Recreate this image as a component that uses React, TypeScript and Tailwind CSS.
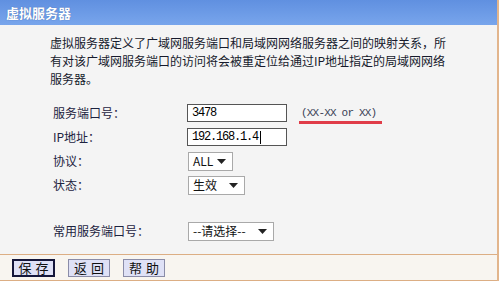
import { ReactNode } from "react";

function Caret() {
  return (
    <svg width="9" height="5" viewBox="0 0 9 5" className="shrink-0">
      <path d="M0 0 H9 L4.5 5 Z" fill="#222" />
    </svg>
  );
}

function Row({ label, children }: { label: string; children: ReactNode }) {
  return (
    <div className="flex items-center h-[24px]">
      <div className="w-[187px] shrink-0 pl-[53px] whitespace-nowrap text-[12px] text-[#1c2340]">{label}</div>
      <div className="flex items-center">{children}</div>
    </div>
  );
}

function Select({ value, width }: { value: string; width: string }) {
  return (
    <div
      className={`${width} h-[19px] ml-[1px] flex items-center justify-between pl-[4px] pr-[6px] bg-white border border-[#a9a9a9] text-[12px] text-[#111]`}
    >
      <span>{value}</span>
      <Caret />
    </div>
  );
}

export default function App() {
  return (
    <div className="w-[501px] h-[284px] bg-white font-['Noto_Sans_CJK_SC','Liberation_Sans',sans-serif]">
      <div className="w-[499px] h-[281px] flex flex-col border-r-2 border-[#e2b58c] bg-[#f4f4f4]">
        <header className="h-[25px] shrink-0 flex items-center pl-[6px] bg-gradient-to-b from-[#6090e0] to-[#78a5ec]">
          <h1 className="text-[13px] font-bold text-white [text-shadow:0_0_1px_#3a5fa0]">虚拟服务器</h1>
        </header>

        <main className="flex-1 flex flex-col">
          <p className="w-[400px] ml-[50px] mt-[9px] text-[12px] leading-[18px] text-[#161a2c]">
            虚拟服务器定义了广域网服务端口和局域网网络服务器之间的映射关系，所有对该广域网服务端口的访问将会被重定位给通过IP地址指定的局域网网络服务器。
          </p>

          <div className="mt-[13px] flex flex-col">
            <Row label="服务端口号：">
              <div className="w-[100px] h-[18px] flex items-center pl-[4px] bg-white border border-[#555] text-[12px] tracking-[-1.2px] font-['Liberation_Mono',monospace]">
                3478
              </div>
              <div className="ml-[14px] flex flex-col items-start">
                <span className="text-[11px] tracking-[-0.8px] text-[#3a3f55] leading-[14px] mt-[4px] font-['Liberation_Mono',monospace]">
                  (XX-XX or XX)
                </span>
                <div className="w-[83px] h-[3px] -ml-[2px] mt-[1px] bg-[#e03c48]" />
              </div>
            </Row>
            <Row label="IP地址：">
              <div className="w-[100px] h-[18px] flex items-center pl-[4px] bg-white border border-[#555] text-[12px] tracking-[-1.2px] font-['Liberation_Mono',monospace]">
                192.168.1.4
                <span className="ml-[2px] w-[1px] h-[13px] bg-black" />
              </div>
            </Row>
            <Row label="协议：">
              <Select value="ALL" width="w-[45px]" />
            </Row>
            <Row label="状态：">
              <Select value="生效" width="w-[57px]" />
            </Row>
            <div className="mt-[22px]">
              <Row label="常用服务端口号：">
                <Select value="--请选择--" width="w-[86px]" />
              </Row>
            </div>
          </div>
        </main>

        <footer className="h-[27px] shrink-0 flex items-center gap-[13px] pl-[12px] border-t border-b border-[#dcae84] bg-[#f8f5f0]">
          <button className="w-[43px] h-[18px] flex items-center justify-center border-2 border-[#14163a] bg-[#dfe1f6] text-[13px] text-[#111] tracking-[4px] pl-[4px]">
            保存
          </button>
          <button className="w-[42px] h-[18px] flex items-center justify-center border border-[#8a8ca8] bg-[#dfe1f6] text-[13px] text-[#111] tracking-[4px] pl-[4px]">
            返回
          </button>
          <button className="w-[42px] h-[18px] flex items-center justify-center border border-[#8a8ca8] bg-[#dfe1f6] text-[13px] text-[#111] tracking-[4px] pl-[4px]">
            帮助
          </button>
        </footer>
      </div>
    </div>
  );
}
